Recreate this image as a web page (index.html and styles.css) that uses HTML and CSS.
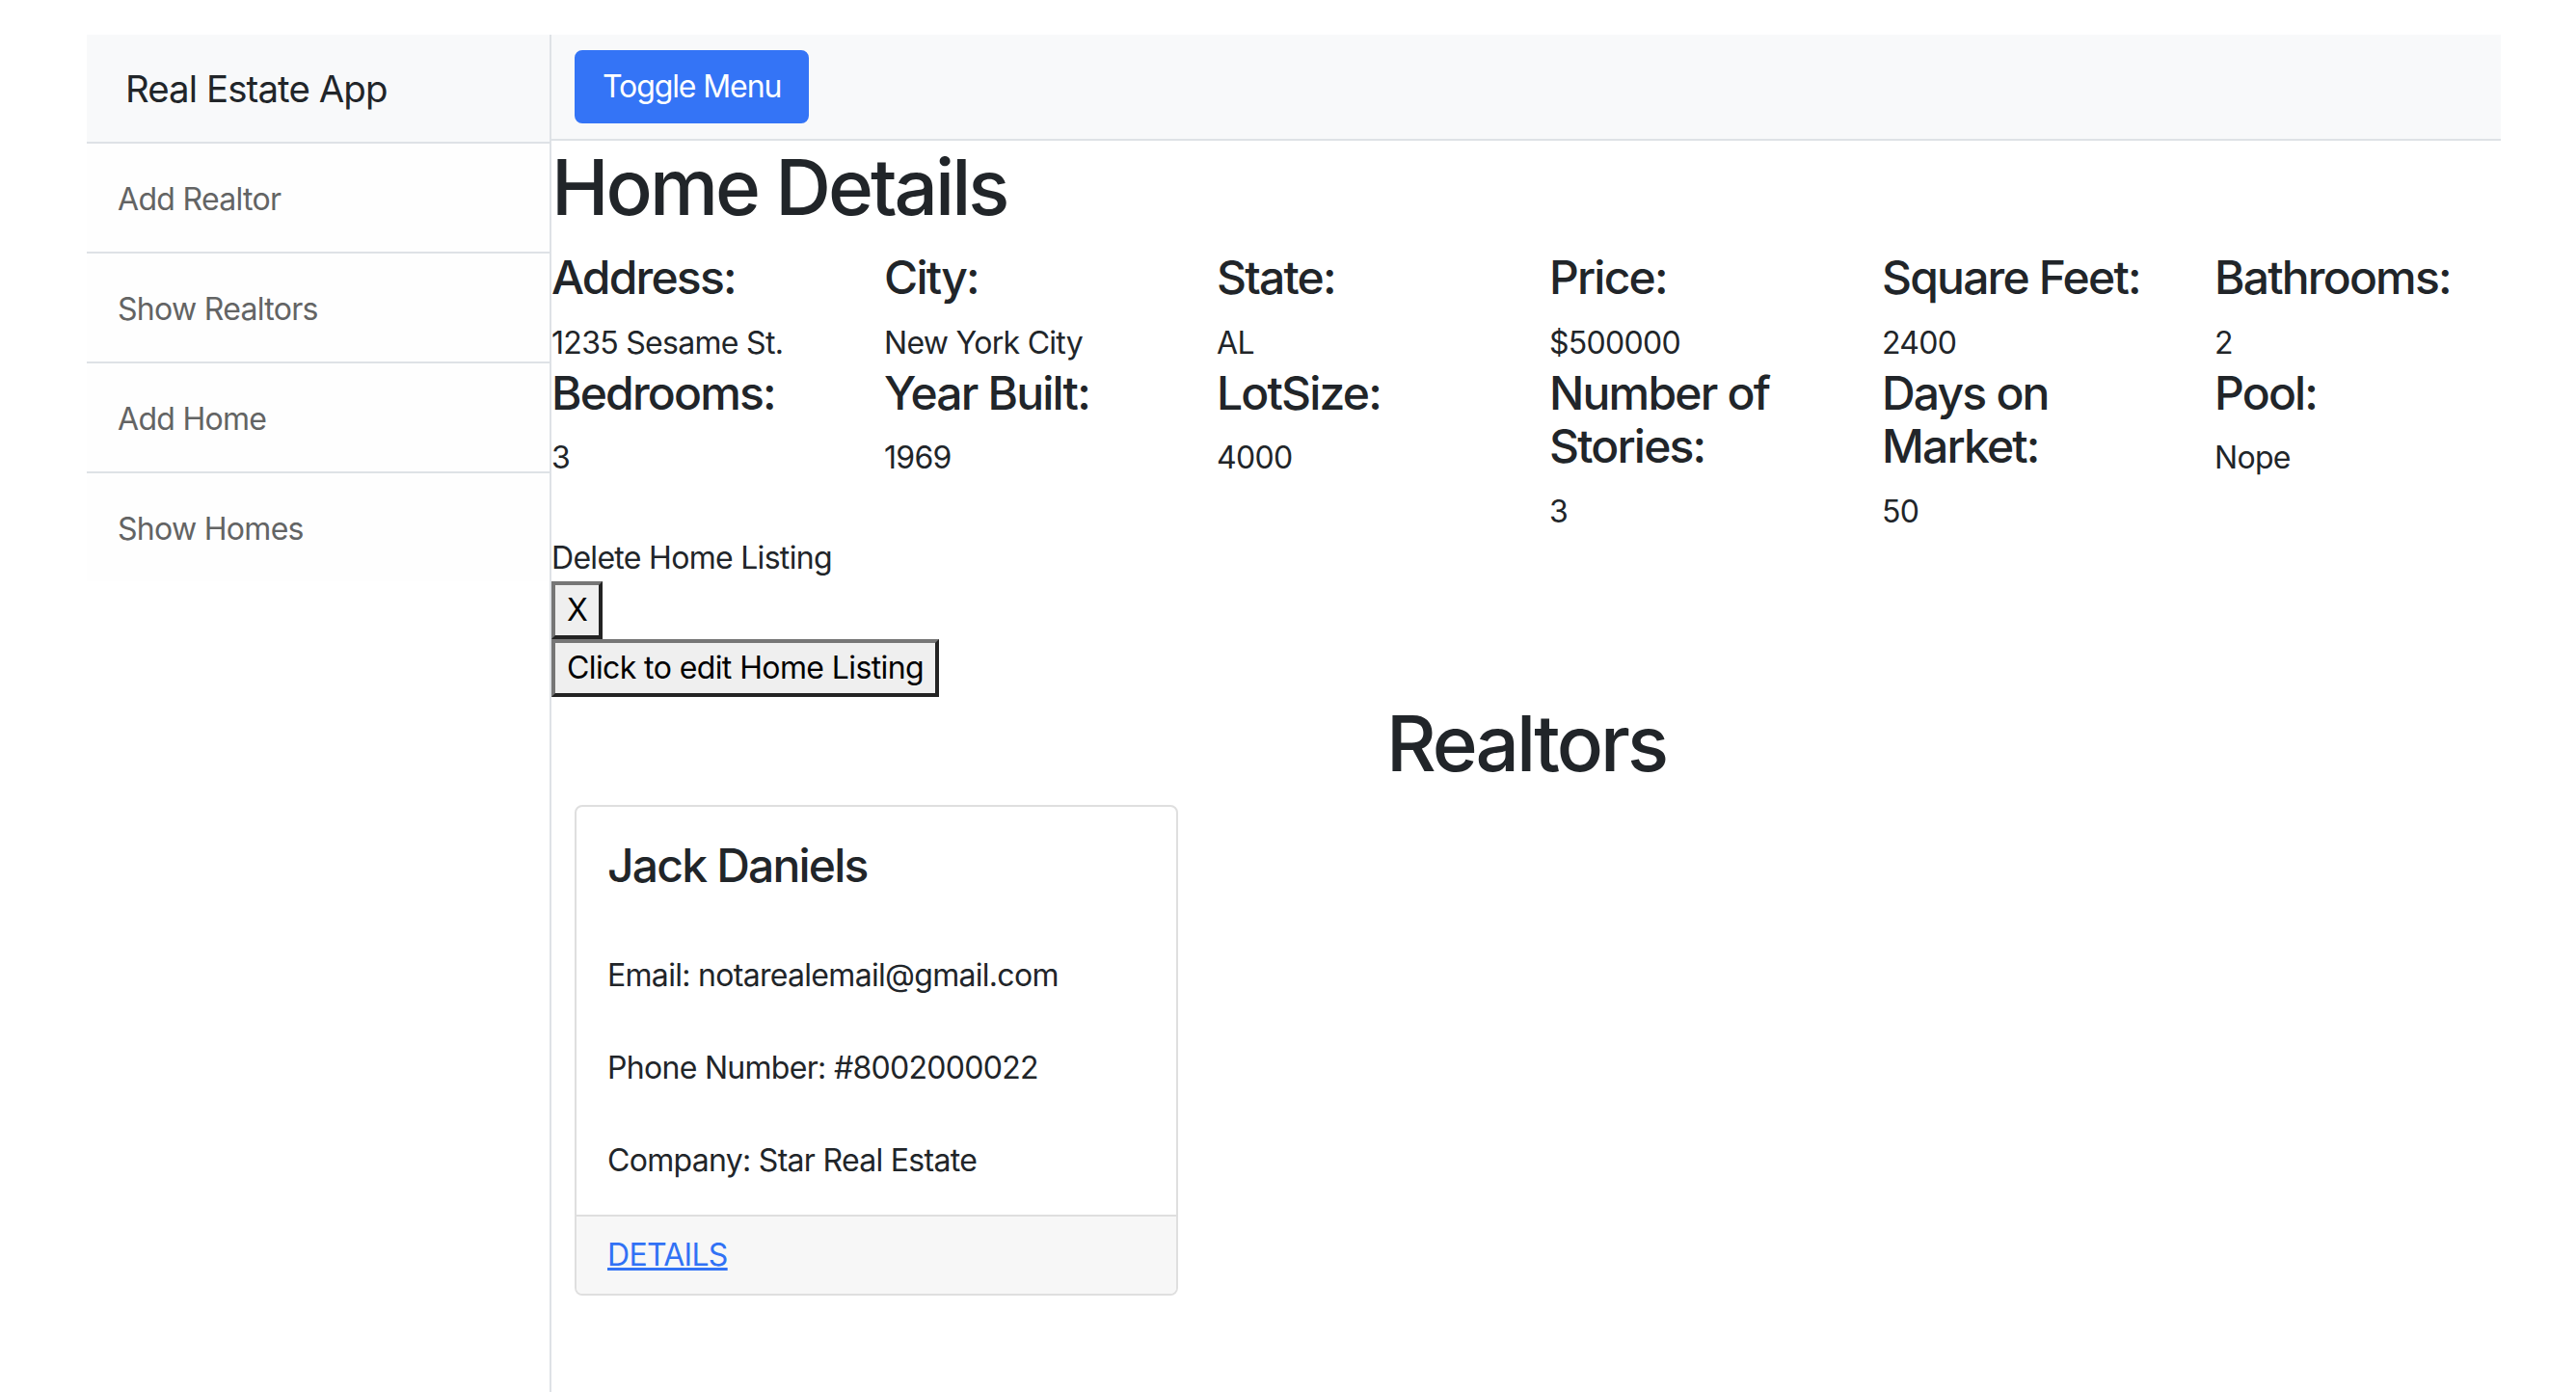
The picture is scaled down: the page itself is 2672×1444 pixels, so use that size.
FILE: index.html
```html
<!DOCTYPE html>
<html lang="en">
<head>
<meta charset="utf-8">
<title>Real Estate App</title>
<link rel="stylesheet" href="styles.css">
</head>
<body>
<div class="wrapper">
  <aside class="sidebar">
    <div class="sidebar-heading">Real Estate App</div>
    <nav class="sidebar-list">
      <a class="sidebar-item" href="#">Add Realtor</a>
      <a class="sidebar-item" href="#">Show Realtors</a>
      <a class="sidebar-item" href="#">Add Home</a>
      <a class="sidebar-item" href="#">Show Homes</a>
    </nav>
  </aside>
  <main class="page">
    <header class="topbar"><button class="btn-primary" type="button">Toggle Menu</button></header>
    <h1 class="title title-main">Home Details</h1>
    <div class="details">
      <div class="detail"><h4 class="detail-label">Address:</h4><p class="detail-value">1235 Sesame St.</p></div>
      <div class="detail"><h4 class="detail-label">City:</h4><p class="detail-value">New York City</p></div>
      <div class="detail"><h4 class="detail-label">State:</h4><p class="detail-value">AL</p></div>
      <div class="detail"><h4 class="detail-label">Price:</h4><p class="detail-value">$500000</p></div>
      <div class="detail"><h4 class="detail-label">Square Feet:</h4><p class="detail-value">2400</p></div>
      <div class="detail"><h4 class="detail-label">Bathrooms:</h4><p class="detail-value">2</p></div>
    </div>
    <div class="details">
      <div class="detail"><h4 class="detail-label">Bedrooms:</h4><p class="detail-value">3</p></div>
      <div class="detail"><h4 class="detail-label">Year Built:</h4><p class="detail-value">1969</p></div>
      <div class="detail"><h4 class="detail-label">LotSize:</h4><p class="detail-value">4000</p></div>
      <div class="detail"><h4 class="detail-label">Number of Stories:</h4><p class="detail-value">3</p></div>
      <div class="detail"><h4 class="detail-label">Days on Market:</h4><p class="detail-value">50</p></div>
      <div class="detail"><h4 class="detail-label">Pool:</h4><p class="detail-value">Nope</p></div>
    </div>
    <div class="delete-label">Delete Home Listing</div>
    <button class="plain-btn" type="button">X</button>
    <button class="plain-btn" type="button">Click to edit Home Listing</button>
    <h1 class="title title-center">Realtors</h1>
    <div class="cards">
      <div class="card">
        <div class="card-body">
          <h4 class="card-title">Jack Daniels</h4>
          <p class="card-text">Email: notarealemail@gmail.com</p>
          <p class="card-text">Phone Number: #8002000022</p>
          <p class="card-text">Company: Star Real Estate</p>
        </div>
        <div class="card-footer"><a class="card-link" href="#">DETAILS</a></div>
      </div>
    </div>
  </main>
</div>
</body>
</html>
```

FILE: styles.css
```css
* { box-sizing: border-box; }
html, body { margin: 0; padding: 0; background: #fff; }
body {
  font-family: Inter, "Noto Sans", sans-serif;
  font-size: 32px;
  line-height: 48px;
  letter-spacing: -0.7px;
  color: #212529;
}
.wrapper {
  display: flex;
  margin: 36px 78px 0 90px;
  min-height: 1408px;
}
.sidebar {
  flex: 0 0 482px;
  width: 482px;
  border-right: 2px solid #dee2e6;
}
.sidebar-heading {
  height: 113px;
  padding: 0 40px;
  display: flex;
  align-items: center;
  background: #f8f9fa;
  border-bottom: 2px solid #dee2e6;
  font-size: 38.4px;
  letter-spacing: -0.9px;
  color: #212529;
}
.sidebar-list { display: flex; flex-direction: column; }
.sidebar-item {
  height: 114px;
  padding: 3px 32px 0;
  display: flex;
  align-items: center;
  background: #fefefe;
  color: #636464;
  text-decoration: none;
  border-bottom: 2px solid #dee2e6;
}
.sidebar-item:last-child { border-bottom: 0; height: 112px; }
.page { flex: 1; min-width: 0; }
.topbar {
  height: 110px;
  padding: 16px 24px;
  background: #f8f9fa;
  border-bottom: 2px solid #dee2e6;
}
.btn-primary {
  height: 76px;
  padding: 0 27px;
  font: inherit;
  letter-spacing: -1.1px;
  color: #fff;
  background: #3474f6;
  border: 2px solid #3474f6;
  border-radius: 8px;
}
.title {
  margin: 0 0 16px;
  font-size: 80px;
  line-height: 96px;
  font-weight: 500;
  letter-spacing: -3px;
}
.title-main { margin-bottom: 18px; }
.title-center { text-align: center; }
.details {
  display: grid;
  grid-template-columns: repeat(6, 1fr);
  column-gap: 48px;
}
.detail-label {
  margin: 0 0 16px;
  font-size: 48px;
  line-height: 55.5px;
  font-weight: 500;
  letter-spacing: -1.8px;
}
.detail-value { margin: 0; }
.plain-btn {
  display: block;
  font: inherit;
  letter-spacing: -0.6px;
  color: #000;
  background: #efefef;
  padding: 2px 12px;
  border: 4px solid;
  border-color: #767676 #232323 #232323 #767676;
  border-radius: 0;
}
.cards { padding: 0 24px; }
.card {
  width: 626px;
  border: 2px solid #dfdfdf;
  border-radius: 8px;
  overflow: hidden;
}
.card-body { padding: 32px; }
.card-title {
  margin: 0 0 62px;
  font-size: 48px;
  line-height: 57.6px;
  font-weight: 500;
  letter-spacing: -1.8px;
}
.card-text { margin: 0 0 48px; }
.card-text:last-child { margin-bottom: 0; }
.card-footer {
  padding: 16px 32px;
  background: #f7f7f7;
  border-top: 2px solid #dfdfdf;
}
.card-link { color: #3172f5; text-decoration: underline; }
```
